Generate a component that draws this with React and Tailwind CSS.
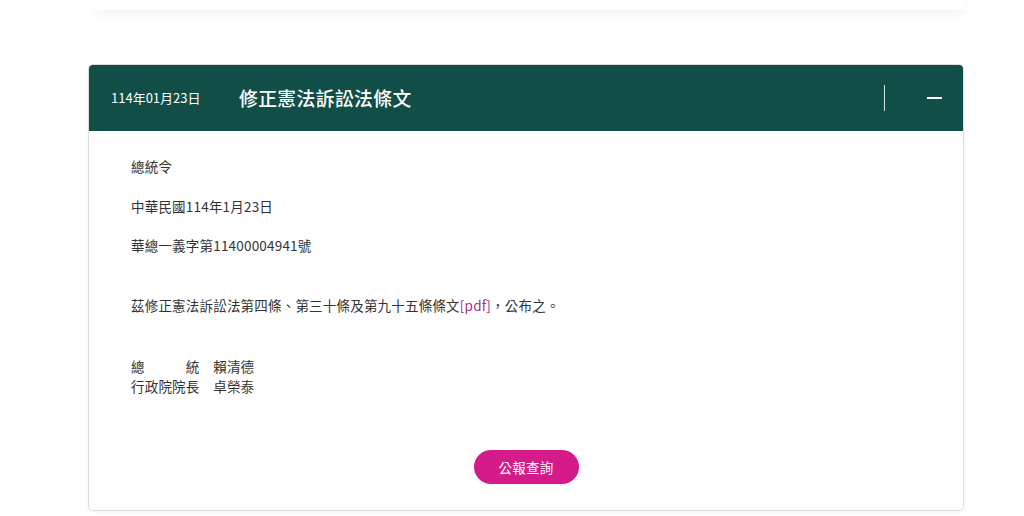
import React from 'react';

const font = { fontFamily: '"Noto Sans CJK TC", "Noto Sans", sans-serif' };

const App = () => {
  return (
    <div className="min-h-[516px] bg-white" style={font}>
      {/* faded previous card edge */}
      <div className="ml-[95px] w-[870px] h-[10px] bg-white shadow-[0_4px_10px_rgba(0,0,0,0.05)]" />

      <div className="ml-[88px] mt-[54px] w-[876px] rounded-[5px] border border-[#dcdcdc] shadow-[0_1px_3px_rgba(0,0,0,0.06)] overflow-hidden">
        {/* Header */}
        <div className="h-[66px] bg-[#114e47] flex items-center pl-[22px] pr-[21px] text-white">
          <span className="w-[128px] text-[13px]">114年01月23日</span>
          <h2 className="text-[18.8px] font-medium tracking-[0.4px]">修正憲法訴訟法條文</h2>
          <div className="ml-auto flex items-center">
            <div className="w-px h-[26px] bg-[#cfe3df]" />
            <button className="ml-[41px] w-[16px] h-[16px] flex items-center justify-center">
              <span className="block w-[15px] h-[2px] bg-white" />
            </button>
          </div>
        </div>

        {/* Body */}
        <div className="px-[42px] pt-[25px] pb-[26px] text-[13.5px] leading-[20px] tracking-[0.2px] text-[#333]">
          <p className="mb-[20px]">總統令</p>
          <p className="mb-[19px]">中華民國114年1月23日</p>
          <p className="mb-[40px]">華總一義字第11400004941號</p>
          <p className="mb-[41px]">
            茲修正憲法訴訟法第四條、第三十條及第九十五條條文
            <a href="#" className="text-[#a8307f]">[pdf]</a>，公布之。
          </p>
          <p>
            總　　　統　賴清德
            <br />
            行政院院長　卓榮泰
          </p>

          <div className="mt-[54px] flex justify-center">
            <button className="w-[105px] h-[34px] rounded-full bg-[#d51a8a] text-white text-[13.5px]">
              公報查詢
            </button>
          </div>
        </div>
      </div>
    </div>
  );
};

export default App;
